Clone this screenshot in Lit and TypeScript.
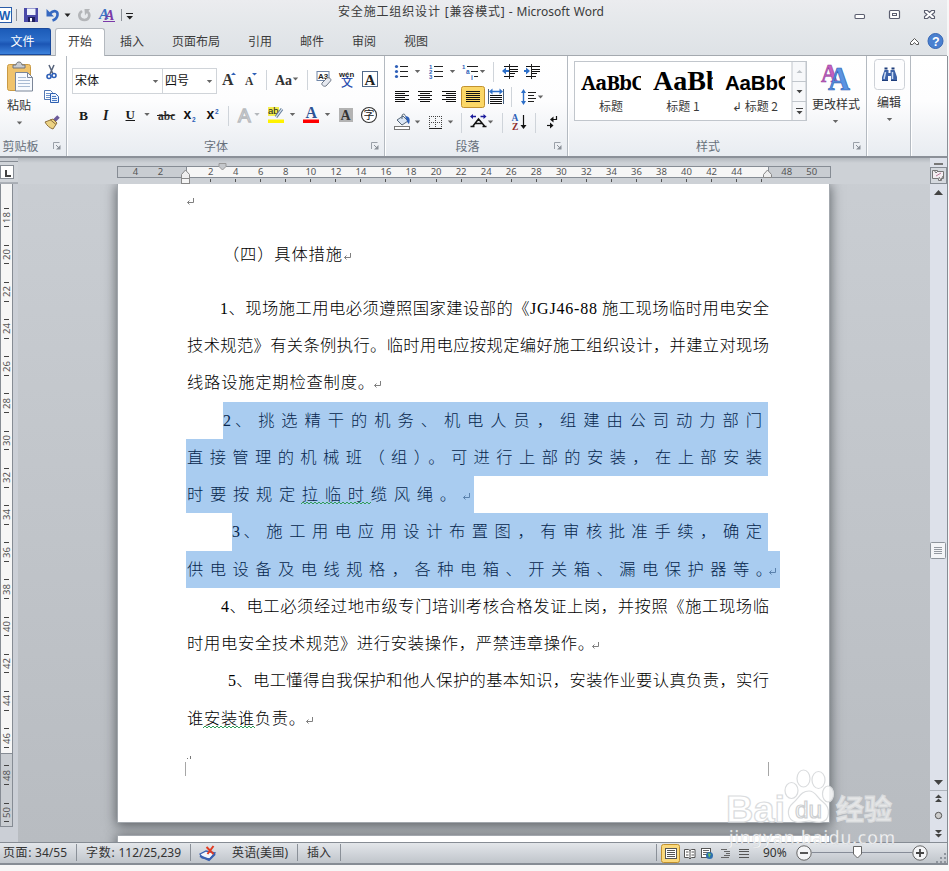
import { LitElement, html, svg, css, nothing } from "lit";
import { customElement } from "lit/decorators.js";
import { styleMap } from "lit/directives/style-map.js";

// Each glyph is drawn in window coordinates; the viewBox picks out its own slot.
const ic = (x: number, y: number, w: number, h: number, body: unknown) =>
  html`<svg class="ic" width=${w} height=${h} viewBox="${x} ${y} ${w} ${h}">${body}</svg>`;
const P = (d: string, stroke: string, w = 1, fill = "none") =>
  svg`<path d=${d} stroke=${stroke} stroke-width=${w} fill=${fill}></path>`;
const F = (d: string, fill: string) => svg`<path d=${d} fill=${fill}></path>`;
const T = (x: number, y: number, s: number, t: string, fill: string, family = "Liberation Serif", weight = 700, extra = "") =>
  svg`<text x=${x} y=${y} font-size=${s} fill=${fill} font-family="${family}" font-weight=${weight} style=${extra}>${t}</text>`;
const arrow = (cx: number, y: number, c = "#666") => F(`M${cx - 2.7} ${y}h5.4l-2.7 3z`, c);
const sep = (x: number, y: number, h: number) => P(`M${x}.5 ${y}v${h}`, "#cfd4da");
const hl = (rows: number[][], c = "#000", w = 1) =>
  P(rows.map(([x, y, n]) => `M${x} ${y}.5h${n}`).join(""), c, w);

const launcher = (x: number) =>
  ic(x, 142, 8, 8, svg`${P(`M${x + 0.5} 149v-6.5h6`, "#9aa0a8")}${P(`M${x + 3} 145l3 3`, "#8a9098")}${F(`M${x + 7.5} 145v4.5h-4.5z`, "#8a9098")}`);

const TABS = ["插入", "页面布局", "引用", "邮件", "审阅", "视图"];

interface Line {
  x: number; w: number; text: unknown; h?: number; mark?: number; sel?: [number, number]; wave?: [number, number];
}
const n = (t: string) => html`<span class="num">${t}</span>`;
const LINES: Line[] = [
  { x: 223, w: 119, text: "（四）具体措施", mark: 343, h: 37 },
  { x: 220, w: 549, text: html`${n("1")}、现场施工用电必须遵照国家建设部的《<span class="num code">JGJ46-88</span> 施工现场临时用电安全` },
  { x: 187, w: 582, text: "技术规范》有关条例执行。临时用电应按规定编好施工组织设计，并建立对现场" },
  { x: 187, w: 187, text: "线路设施定期检查制度。", mark: 373, h: 38 },
  { x: 223, w: 539, text: html`${n("2")}、挑选精干的机务、机电人员，组建由公司动力部门`, sel: [223, 768] },
  { x: 187, w: 575, text: "直接管理的机械班（组）。可进行上部的安装，在上部安装", sel: [186, 768] },
  { x: 187, w: 269, text: "时要按规定拉临时缆风绳。", mark: 462, sel: [186, 474], wave: [301, 371] },
  { x: 232, w: 530, text: html`${n("3")}、施工用电应用设计布置图，有审核批准手续，确定`, sel: [232, 768], h: 38 },
  { x: 187, w: 585, text: "供电设备及电线规格，各种电箱、开关箱、漏电保护器等。", mark: 768, sel: [186, 780] },
  { x: 221, w: 548, text: html`${n("4")}、电工必须经过地市级专门培训考核合格发证上岗，并按照《施工现场临` },
  { x: 187, w: 407, text: "时用电安全技术规范》进行安装操作，严禁违章操作。", mark: 591 },
  { x: 228, w: 541, text: html`${n("5")}、电工懂得自我保护和他人保护的基本知识，安装作业要认真负责，实行`, h: 38 },
  { x: 187, w: 118, text: "谁安装谁负责。", mark: 305, wave: [203, 255] },
];

const mark = (c = "#7f7f7f") =>
  svg`<path d="M7.5 0v4.5h-6M1.5 4.5l2-2M1.5 4.5l2 2M2.5 3.5v2" stroke=${c} fill="none"></path>`;

@customElement("app-root")
export class AppRoot extends LitElement {
  static styles = css`
    :host { display: flex; flex-direction: column; width: 949px; height: 871px; overflow: hidden; position: relative;
      background: #f7f7f7; font: 12px/16px "Noto Sans", "Noto Sans CJK SC", sans-serif; color: #3b3b3b; }
    * { box-sizing: border-box; }
    .ic { display: block; flex: none; overflow: visible; }
    .row { display: flex; }
    .cjk { font-family: "Noto Sans CJK SC", sans-serif; }
    .head { height: 56px; width: 947px; background: linear-gradient(#ebecef, #e5e8eb 40%, #dee2e6); display: flex; flex-direction: column;
      border-bottom: 1px solid #a4a9af; }
    .title { display: flex; height: 28px; }
    .caption { width: 266px; margin-left: 205px; padding-top: 4px; text-align-last: justify; white-space: nowrap; }
    .tabs { display: flex; height: 28px; }
    .file { width: 51px; height: 27px; background: linear-gradient(#1c5bb8, #2b6cc8 45%, #1b55b4 60%, #3c82dc); color: #fff;
      border-radius: 0 3px 0 0; border: 1px solid #1a4a9c; border-left: 0; text-align: center; line-height: 24px; padding-right: 5px; }
    .tab { padding: 0 14px; line-height: 26px; }
    .tab.on { width: 50px; margin-left: 4px; margin-right: 1px; padding: 0 0 0 12px; background: #fff; border: 1px solid #b4b9bf; border-bottom: 0;
      border-radius: 3px 3px 0 0; line-height: 24px; height: 28px; }
    .ribbon { display: flex; height: 102px; width: 948px; background: linear-gradient(#fff, #fdfdfe 45%, #f1f3f6 75%, #e8ecf1);
      border-bottom: 2px solid #8b9098; border-right: 1px solid #8b9098; }
    .group { display: flex; flex-direction: column; border-right: 1px solid #b4bac1; box-shadow: 1px 0 #fff; height: 100px; flex: none; }
    .label { height: 20px; margin-top: auto; display: flex; color: #67707b; line-height: 19px; }
    .label span { flex: 1; text-align: center; }
    .label .ic { margin: 6px 5px 0 0; }
    .combo { height: 26px; border: 1px solid #d0d4d9; background: #fff; display: flex; color: #111; line-height: 22px; padding-left: 2px; justify-content: space-between; }
    .combo + .combo { border-left: 0; }
    .second { margin-top: 6px; }
    .gallery { display: flex; height: 60px; border: 1px solid #c1c6cc; background: #fff; width: 233px; }
    .style { width: 72px; height: 58px; display: flex; flex-direction: column; align-items: center; flex: none; }
    .sample { width: 60px; height: 36px; overflow: hidden; white-space: nowrap; color: #000; font-weight: 700; line-height: 41px; }
    .s1 { font-family: "Noto Serif", "DejaVu Serif", "Liberation Serif", serif; font-size: 20px; letter-spacing: -0.8px; }
    .s2 { font-family: "Liberation Serif", serif; font-size: 28px; line-height: 37px; }
    .s3 { font-family: "Liberation Sans", sans-serif; font-size: 20.5px; letter-spacing: -0.2px; }
    .work { display: grid; grid-template: 26px 658px / 18px 912px 17px 1px; height: 684px; width: 948px;
      background: linear-gradient(#caced3, #b8bcc1); flex: none; }
    .corner { padding: 3px 0 0; background: #c9cdd3; }
    .hr { background: linear-gradient(#b3b8be, #cdd1d6 5px); padding: 8px 0 0 99px; display: flex; flex-direction: column; }
    .bar { display: flex; width: 714px; height: 12px; border: 1px solid #868c94; background: linear-gradient(90deg, #c9cdd2 68px, #868c94 68px, #868c94 69px, #f6f6f6 69px, #f6f6f6 650px, #868c94 650px, #868c94 651px, #c9cdd2 651px);
      padding-left: 5px; font: 9.5px/10px "Noto Sans", sans-serif; color: #555; }
    .bar span { width: 25.06px; text-align: center; flex: none; }
    .vr { grid-row: 2; background: #cbcfd6; }
    .vbar { width: 13px; height: 643px; border: 1px solid #868c94; border-top: 0; background: linear-gradient(#f6f6f6 569px, #868c94 569px, #868c94 570px, #c9cdd2 570px); padding-top: 15px; }
    .vcell { height: 37.2px; display: flex; flex-direction: column; justify-content: space-between; align-items: center; padding: 8.5px 0 9px; }
    .vcell i { width: 5px; height: 1px; background: #444; }
    .vcell b { writing-mode: vertical-rl; transform: rotate(180deg); font: 9.5px/10px "Noto Sans", sans-serif; color: #555; }
    .doc { grid-column: 2; overflow: hidden; padding-left: 99px; background: none; }
    .page { width: 713px; height: 639px; background: #fff; border: 1px solid #a3a8ae; border-top: 0; box-shadow: 0 2px 11px 1px rgba(40,45,50,.62); position: relative; }
    .next { margin-top: 12px; border-top: 1px solid #a3a8ae; height: 40px; }
    .body { padding-top: 14px; display: flex; flex-direction: column; width: 711px; }
    .line { display: flex; align-items: stretch; height: 37px; color: #000; flex: none; }
    .line.sel { color: #06264c; }
    .hl { display: flex; background: #a9ccf0; }
    .plain { display: flex; }
    .txt { position: relative; display: block; white-space: nowrap; text-align: justify; text-align-last: justify; font: 300 16.3px/35px "Noto Sans CJK SC", sans-serif; flex: none; }
    .num { font: 400 16px/20px "Liberation Serif", serif; }
    .sel .num { margin-right: -3px; }
    .code { letter-spacing: 0.8px; }
    .wave { position: absolute; bottom: 8px; height: 4px; }
    .crop { display: flex; justify-content: space-between; width: 584px; margin-left: 67px; height: 14px; border: 1px solid #a6a6a6; border-width: 0 1px; }
    .dots { margin: 19px 0 3px 69px; }
    .scroll { grid-column: 3; grid-row: 1 / 3; background: #dde1ea; }
    .edge { grid-column: 4; grid-row: 1 / 3; background: #868c94; }
    .status { height: 23px; width: 948px; display: flex; flex: none; background: linear-gradient(#e3e6ea, #d3d7dc 45%, #c0c5cb); border: 1px solid #868c94; border-left: 0;
      line-height: 20px; border-bottom: 2px solid #868c94; color: #333; }
    .status span { white-space: nowrap; text-align-last: justify; flex: none; }
    .mark { position: absolute; left: 720px; top: 762px; }
  `;

  private head() {
    return html`<div class="head">
      <div class="title">
        ${ic(0, 0, 133, 28, svg`
          <rect x="-6" y="7.5" width="17.5" height="15" fill="#fff" stroke="#2a5ca8"></rect>${T(-1, 20, 12, "W", "#1b5fb4", "Liberation Sans")}
          ${P("M16.5 9v12", "#8d9299")}
          <rect x="24" y="8" width="14" height="14" fill="#4a4aa8"></rect><rect x="27" y="8.5" width="8.5" height="6.5" fill="#eef2fb"></rect><rect x="28" y="17" width="7" height="5" fill="#20205e"></rect><rect x="30" y="18" width="2" height="3.5" fill="#fff"></rect>
          ${P("M50 13.5c4-4 8-2.500 7.500 1.500c-.3 2.500-2 4.500-5 5.500", "#3568c0", 2.6)}${F("M46.500 9v7.500h7.500z", "#3568c0")}
          ${F("M64.500 13.500h6l-3 3.500z", "#222")}
          ${P("M82 11c-4.500 3-3 9 2.500 9c5 0 6.500-6 2.500-8.500", "#b3b5b8", 2.600)}${F("M84.500 9h5.500l-5 6.500z", "#b3b5b8")}
          ${T(99, 19, 15, "A", "#3c70c4", "Liberation Serif", 700, "font-style:italic")}${T(105, 20, 14, "A", "#7a3aa8", "Liberation Serif", 700, "font-style:italic")}${P("M103 21.500h12", "#7a3aa8")}
          ${P("M121.500 9v12", "#8d9299")}${P("M126 13.500h7", "#222")}${F("M126.500 16h6.500l-3.200 3.500z", "#222")}`)}
        <div class="caption">安全施工组织设计 [兼容模式] - Microsoft Word</div>
        ${ic(604, 0, 343, 28, svg`
          <rect x="855" y="14.500" width="9.500" height="4" rx="1" fill="#fff" stroke="#5c5f70" stroke-width="1.100"></rect>
          <rect x="889.500" y="10.500" width="10" height="8" rx="1" fill="#fff" stroke="#5c5f70" stroke-width="1.200"></rect><rect x="892.500" y="13.500" width="4" height="2" fill="#fff" stroke="#5c5f70"></rect>
          <path d="M924.500 10.500h3l2 2 2-2h3v2l-2.500 2 2.500 2v2h-3l-2-2-2 2h-3v-2l2.500-2-2.500-2z" fill="#fff" stroke="#5c5f70" stroke-width="1.100"></path>`)}
      </div>
      <div class="tabs">
        <div class="file cjk">文件</div><div class="tab on cjk">开始</div>
        ${TABS.map((t) => html`<div class="tab cjk">${t}</div>`)}
        ${ic(442, 28, 505, 28, svg`${P("M910.500 42.500l4-4 4 4v2h-2.200l-1.800-2-1.800 2h-2.200z", "#555", 1, "#fff")}
          <circle cx="935.500" cy="41" r="7.500" fill="#4a80d0" stroke="#3566b4"></circle>${T(932, 45.500, 12.500, "?", "#fff", "Liberation Sans")}`)}
      </div>
    </div>`;
  }

  private clipboard() {
    return html`<div class="group" style="width:67px">
      ${ic(0, 56, 66, 80, svg`
        <rect x="7.500" y="64.500" width="23" height="26" rx="2" fill="#f0c36c" stroke="#c99a45"></rect>
        <path d="M13 68v-3h3c0-4 6-4 6 0h3v3z" fill="#c9ccd0" stroke="#70757c"></path>
        <path d="M15.500 72.500h12l5 5v13.500h-17z" fill="#f7fafe" stroke="#7b8698"></path>${P("M27.500 72.500v5h5", "#7b8698")}
        ${hl([[18, 77, 8], [18, 80, 12], [18, 83, 12], [18, 86, 12]], "#a9bbd3")}
        ${T(7, 110, 12, "粘贴", "#333", "Noto Sans CJK SC", 400)}${arrow(19.500, 121.500)}
        ${P("M49 65l4 9M54 65l-4 9", "#55627a", 1.500)}<circle cx="49" cy="76.500" r="2" fill="none" stroke="#2d5fb8" stroke-width="1.600"></circle><circle cx="54" cy="75.500" r="2" fill="none" stroke="#2d5fb8" stroke-width="1.600"></circle>
        <path d="M44.500 90.500h6l2 2v7h-8z" fill="#fff" stroke="#5479b4"></path>${hl([[46, 93, 4], [46, 95, 4], [46, 97, 4]], "#6d93cc")}
        <path d="M50.500 93.500h5l3 3v6h-8z" fill="#eaf2fd" stroke="#2d5fb0"></path>${hl([[52, 96, 4], [52, 98, 5], [52, 100, 5]], "#4a7ac4")}
        ${P("M54 121l4.500-4.500", "#6b5a9a", 3.500)}${F("M45 122l8-3 4 4-4 6c-3-1-6-3-8-7z", "#ecd283")}${P("M45 122l8-3 4 4-4 6c-3-1-6-3-8-7zM50 119.500l6 5", "#8d7040")}`)}
      <div class="label"><span class="cjk" style="margin-left:-12px">剪贴板</span>${launcher(54)}</div>
    </div>`;
  }

  private font() {
    return html`<div class="group" style="width:318px">
      <div class="row" style="padding:12px 0 0 5px">
        <div class="combo cjk" style="width:91px">宋体${ic(151, 68, 11, 24, arrow(155.500, 79))}</div>
        <div class="combo cjk" style="width:54px">四号${ic(205, 68, 11, 24, arrow(209.500, 79))}</div>
        ${ic(217, 68, 167, 26, svg`
          ${T(222, 85, 16, "A", "#333")}${F("M231 75h5l-2.500-2.500z", "#2d5fb8")}
          ${T(245, 85, 11.500, "A", "#333")}${F("M252 73h5l-2.500 2.500z", "#2d5fb8")}
          ${sep(266, 70, 20)}${T(275, 84.500, 14, "Aa", "#333")}${arrow(295.500, 77.500)}${sep(307, 70, 20)}
          <rect x="317" y="71.500" width="12" height="9" fill="#fff" stroke="#7086a8"></rect>${T(318, 79, 8, "A3", "#222", "Liberation Sans")}
          ${P("M322 83l5-5c2-1 5 1 3.500 3l-4.500 5c-2 1-5-1-4-3z", "#6a7484", 1, "#e6e9f0")}
          ${T(339, 76.500, 7.800, "wén", "#222", "Liberation Sans")}${T(341, 87, 12, "文", "#2c50b0", "Noto Sans CJK SC", 500)}
          <rect x="362.500" y="71.500" width="15" height="15" fill="#fff" stroke="#526a8a"></rect>${T(364.500, 84.500, 15, "A", "#222")}`)}
      </div>
      <div class="second">${ic(67, 100, 317, 30, svg`
        ${T(79, 119.500, 13.500, "B", "#1a1a1a")}${T(103, 119.500, 14, "I", "#1a1a1a", "Liberation Serif", 700, "font-style:italic")}
        ${T(125.500, 118.500, 13, "U", "#1a1a1a")}${P("M125.500 120.500h9.500", "#1a1a1a")}${arrow(147, 113)}
        ${T(158, 119.500, 11.500, "abc", "#333")}${P("M157 115.500h17.500", "#222")}
        ${T(183.500, 119, 14, "x", "#111", "Liberation Sans")}${T(192, 121.500, 6.500, "2", "#2d5fb8", "Liberation Sans")}
        ${T(206.500, 119, 14, "x", "#111", "Liberation Sans")}${T(215, 113.500, 6.500, "2", "#2d5fb8", "Liberation Sans")}
        ${sep(228, 106, 20)}${svg`<text x="238" y="121.500" font-size="19" font-family="Liberation Sans" fill="#f7f7f7" stroke="#b9bcc0" stroke-width="1.300">A</text>`}${arrow(257, 113, "#b5b8bc")}
        <rect x="268" y="107" width="11" height="9" fill="#f4ee4c"></rect>${T(268, 114, 9.500, "ab", "#222", "Liberation Sans", 400)}${P("M276 117l6-8", "#667f9c", 3)}${P("M276 117l6-8", "#dfe8f2", 1.200)}
        <rect x="268" y="119.500" width="16" height="3.500" fill="#fff200"></rect>${arrow(292.500, 113)}
        ${T(305.500, 118, 16, "A", "#2d5295")}<rect x="303" y="119.500" width="16" height="3.500" fill="#f00"></rect>${arrow(327.500, 113)}
        <rect x="339" y="108" width="14" height="14" fill="#b3b3b3"></rect>${T(340.500, 119.800, 14, "A", "#333")}
        <circle cx="369" cy="115" r="7.500" fill="#fff" stroke="#333" stroke-width="1.100"></circle>${T(363.500, 119.200, 11, "字", "#222", "Noto Sans CJK SC", 400)}`)}</div>
      <div class="label"><span class="cjk" style="margin-left:-6px">字体</span>${launcher(372)}</div>
    </div>`;
  }

  private paragraph() {
    const al = (x: number, off: (i: number) => [number, number]) =>
      hl([0, 1, 2, 3, 4, 5].map((i) => { const [o, w] = off(i); return [x + o, 91 + i * 2, w]; }), "#111");
    return html`<div class="group" style="width:183px">
      ${ic(385, 56, 182, 28, svg`
        ${[66.500, 71.500, 76.500].map((y) => svg`<circle cx="396.500" cy=${y} r="1.600" fill="#2d5fb8"></circle>${P(`M400 ${y}h8`, "#222")}`)}${arrow(417.500, 70)}
        ${["1", "2", "3"].map((t, i) => svg`${T(429, 69 + i * 5, 6, t, "#2d5fb8", "Liberation Sans")}${P(`M434 ${66.500 + i * 5}h9`, "#222")}`)}${arrow(452.500, 70)}
        ${T(462, 68.500, 6, "1", "#2d5fb8", "Liberation Sans")}${T(466, 74, 6.500, "a", "#2d5fb8", "Liberation Sans")}${T(471, 79.500, 6.500, "i", "#2d5fb8", "Liberation Sans")}
        ${hl([[467, 66, 11], [471, 71, 7], [474, 76, 4]], "#222")}${arrow(482.500, 70)}${sep(493, 62, 20)}
        ${hl([[504, 66, 14], [510, 69, 8], [510, 71, 8], [510, 73, 5], [504, 76, 10]], "#111", 1.200)}${P("M509.500 64v15", "#222")}${F("M502 71l4-3.500v2.500h3v2h-3v2.500z", "#2d6fc8")}
        ${hl([[526, 66, 14], [532, 69, 8], [532, 71, 8], [532, 73, 5], [526, 76, 10]], "#111", 1.200)}${P("M531.500 64v15", "#222")}${F("M530 71l-4-3.500v2.500h-2v2h2v2.500z", "#2d6fc8")}`)}
      ${ic(385, 84, 182, 26, svg`
        ${al(395, (i) => [0, i % 2 ? 10 : 14])}${al(418, (i) => (i % 2 ? [2, 10] : [0, 14]))}${al(442, (i) => (i % 2 ? [4, 10] : [0, 14]))}
        <rect x="461.500" y="86.500" width="23" height="21" rx="2" fill="#fbd767" stroke="#c2922f"></rect>${al(466, () => [0, 14])}
        ${P("M488.500 89v15M503.500 89v15", "#46607f")}${P("M491 91.500h10", "#2d6fc8", 1.500)}${F("M489 91.500l3.500-3v6zM503 91.500l-3.500-3v6z", "#2d6fc8")}${hl([[490, 95, 12], [490, 97, 12], [490, 99, 12], [490, 101, 12], [490, 103, 12]], "#111")}
        ${sep(511, 87, 20)}${P("M523.500 91v12", "#2d6fc8", 1.400)}${F("M521 93h5l-2.500-4zM521 101h5l-2.500 4z", "#2d6fc8")}${hl([[528, 92, 8], [528, 95, 6], [528, 98, 8], [528, 101, 6]], "#222")}${arrow(540.500, 95.500)}`)}
      ${ic(385, 110, 182, 26, svg`
        <rect x="394.500" y="126.500" width="15" height="3" fill="#fff" stroke="#777"></rect>${P("M397 120l6-4 5 5-6 4z", "#567", 1, "#dbe6f4")}${P("M402 119v-3c0-3 4-2 3 0", "#567")}${F("M405 116c5 0 5.500 4 4 8c-2-1-2-4-4-8z", "#2d5fb8")}${arrow(417.500, 120.500)}
        <path d="M429 116.500h13M429.500 116v12M435.500 116v12M441.500 116v12M429 122.500h13" stroke="#444" stroke-dasharray="1 1" fill="none"></path>${P("M429 128.500h13", "#222")}${arrow(450.500, 120.500)}
        ${sep(461, 113, 20)}${P("M470.500 126.500h4M482.500 126.500h4M473 126l5.500-7 6 7M475 123.500h7", "#111", 1.500)}${F("M470 116.500l3-2.500v5zM486.500 116.500l-3-2.500v5z", "#1c1c9c")}${P("M472 116.500h4M480.500 116.500h4", "#1c1c9c", 1.400)}${arrow(490.500, 120.500)}${sep(502, 113, 20)}
        ${T(511.500, 121, 9.500, "A", "#2d5fb8")}${T(512, 129.500, 9.500, "Z", "#8e2a2a")}${P("M523.500 115v11", "#111", 1.200)}${F("M520.500 125h6l-3 4z", "#111")}${sep(535, 113, 20)}
        ${P("M556.500 116v3.500h-4", "#111", 1.200)}${F("M550 119.500l3.500-3v6z", "#111")}${P("M547 125.500h4", "#111", 1.200)}${F("M553.500 125.500l-3.500-3v6z", "#111")}`)}
      <div class="label"><span class="cjk" style="margin-left:-4px">段落</span>${launcher(555)}</div>
    </div>`;
  }

  private stylesGroup() {
    return html`<div class="group" style="width:299px">
      <div class="row" style="padding:5px 0 0 6px">
        <div class="gallery">
          <div class="style"><div class="sample s1">AaBbC</div><span class="cjk">标题</span></div>
          <div class="style"><div class="sample s2">AaBbC</div><span class="cjk">标题 1</span></div>
          <div class="style"><div class="sample s3">AaBbC</div><span class="cjk">↲ 标题 2</span></div>
          ${ic(791, 62, 15, 58, svg`<rect x="792" y="61.500" width="14" height="59" fill="#f7f8fa" stroke="#c1c6cc"></rect>${P("M792 81.500h14M792 101.500h14", "#c1c6cc")}
            ${F("M796.500 73h6l-3-3z", "#bfc3c8")}${F("M796.500 90h6l-3 3.200z", "#444")}${P("M796 108.500h7", "#444")}${F("M796.500 111h6l-3 3.200z", "#444")}`)}
        </div>
        ${ic(807, 61, 59, 68, svg`
          <g font-family="Liberation Serif" font-weight="700"><text x="821" y="82" font-size="26" textLength="17" lengthAdjust="spacingAndGlyphs" fill="#c55fc0" stroke="#8e3a97" stroke-width=".6">A</text>
          <text x="828" y="90" font-size="34" textLength="22" lengthAdjust="spacingAndGlyphs" fill="#5b93e2" stroke="#2d62b4" stroke-width=".7">A</text></g>
          ${T(812, 109, 12, "更改样式", "#333", "Noto Sans CJK SC", 400)}${arrow(835.500, 120)}`)}
      </div>
      <div class="label"><span class="cjk" style="margin-left:-5px">样式</span>${launcher(854)}</div>
    </div>
    <div class="group" style="width:44px">
      ${ic(867, 56, 43, 80, svg`<rect x="874.500" y="59.500" width="30" height="30" rx="3" fill="#fdfdfe" stroke="#cdd1d7"></rect>
        ${F("M884.500 70h4v3h2v-3h4l2.500 7v4h-6v-5h-3v5h-6v-4z", "#3c62a8")}${P("M885.500 72l-1.500 7M892.500 72v7", "#c7d9f3", 1.500)}${P("M882 80.500h6M891 80.500h6", "#1d3c7a", 1)}${F("M884.500 67.500h3v2h-3zM891.500 67.500h3v2h-3z", "#1d3c7a")}
        ${T(877, 107, 12, "编辑", "#333", "Noto Sans CJK SC", 400)}${arrow(889.500, 118)}`)}
    </div>`;
  }

  private line(l: Line) {
    const h = l.h ?? 37;
    const markAt = l.mark ? html`<svg class="ic" width="8" height="7" style=${styleMap({ marginLeft: `${l.mark - l.x - l.w}px`, marginTop: "17px" })}>${mark(l.sel ? "#5b82ad" : "#7f7f7f")}</svg>` : nothing;
    const wave = l.wave ? html`<svg class="wave" width=${l.wave[1] - l.wave[0]} height="4" style=${styleMap({ left: `${l.wave[0] - l.x}px` })}>
      <path d=${"M0 3" + "l2 -2l2 2".repeat(Math.ceil((l.wave[1] - l.wave[0]) / 4))} fill="none" stroke="#2f9c5a"></path></svg>` : nothing;
    const start = l.sel ? l.sel[0] : l.x;
    return html`<div class="line ${l.sel ? "sel" : ""}" style=${styleMap({ height: `${h}px`, paddingLeft: `${start - 118}px` })}>
      <div class=${l.sel ? "hl" : "plain"} style=${styleMap({ width: l.sel ? `${l.sel[1] - l.sel[0]}px` : "auto", paddingLeft: `${l.x - start}px` })}>
        <span class="txt" style=${styleMap({ width: `${l.w}px` })}>${l.text}${wave}</span>${markAt}
      </div></div>`;
  }

  private work() {
    const hs = ["4", "2", "", ...Array.from({ length: 22 }, (_, i) => `${(i + 1) * 2}`), "", "48", "50"];
    return html`<div class="work">
      <div class="corner">${ic(0, 161, 18, 23, svg`<rect x="-1" y="161.500" width="19.500" height="21.500" fill="#d0d4d9" stroke="#868c94"></rect><rect x="0.500" y="165.500" width="13" height="13" fill="#fff" stroke="#868c94"></rect>${P("M6 170v6h5", "#444", 2)}`)}</div>
      <div class="hr"><div class="bar">${hs.map((t) => html`<span>${t}</span>`)}</div>
        ${ic(117, 178, 714, 6, svg`${P(Array.from({ length: 23 }, (_, i) => `M${Math.floor(210.500 + i * 25.060)}.5 179v3`).join(""), "#555")}
          <path d="M219 163.500h7v3l-3.500 3.500-3.500-3.500z" fill="#c4c7cb" stroke="#999"></path>
          <path d="M181.500 178.500v-4l4-4.500 4 4.500v4z" fill="#eee" stroke="#888"></path><rect x="181.500" y="178.500" width="8" height="5" fill="#f4f4f4" stroke="#888"></rect>
          <path d="M763.500 177.500v-3l4-4.500 4 4.500v3z" fill="#eee" stroke="#888"></path>`)}</div>
      <div class="vr"><div class="vbar">${Array.from({ length: 17 }, (_, i) => html`<div class="vcell"><i></i><b>${18 + i * 2}</b><i></i></div>`)}</div></div>
      <div class="doc">
        <div class="page"><div class="body">
          <svg class="ic" width="8" height="7" style="margin-left:68px">${mark()}</svg>
          <div style="height:31px"></div>
          ${this.line(LINES[0])}
          <div style="height:17px"></div>
          ${LINES.slice(1).map((l) => this.line(l))}
          <svg class="ic dots" width="6" height="3"><path d="M0 2.500h1M3.500 0v3" stroke="#777"></path></svg>
          <div class="crop"></div>
        </div></div>
        <div class="page next"></div>
      </div>
      <div class="scroll">${ic(930, 158, 17, 684, svg`
        ${P("M934 164h9", "#777", 2)}<rect x="930.500" y="167.500" width="16" height="16" fill="#d5d9df" stroke="#868c94"></rect>
        <path d="M932.500 170.500h5v1h6v7h-2v2h-3v-2h-6z" fill="#f4eef2" stroke="#777"></path>${P("M934 170l2 3 2-2M939 177l2 3 2-4", "#777")}${P("M936 176l5-3", "#b87a98")}
        ${F("M934 195h9l-4.500-5z", "#444")}
        <rect x="930.500" y="542.500" width="15" height="16" rx="1" fill="#f3f4f7" stroke="#8e949c"></rect>${hl([[934, 547, 8], [934, 549, 8], [934, 551, 8], [934, 553, 8]], "#9398a0")}
        ${F("M934 780h9l-4.500 5z", "#444")}${P("M930 790.500h17", "#aeb3bb")}
        ${F("M935 798h7l-3.500-3.500zM935 802h7l-3.500-3.500z", "#444")}<circle cx="938.500" cy="815.500" r="3.200" fill="#ccc" stroke="#555"></circle>
        ${F("M935 830h7l-3.500 3.500zM935 834h7l-3.500 3.500z", "#444")}`)}</div>
      <div class="edge"></div>
    </div>`;
  }

  private status() {
    const st = (x: number) => P(`M${x}.5 844v17`, "#8a9098");
    return html`<div class="status">
      <span style="width:64px;margin-left:3px">页面: 34/55</span>
      ${ic(67, 843, 19, 20, st(76))}
      <span style="width:95px">字数: 112/25,239</span>
      ${ic(181, 843, 51, 20, svg`${st(190)}${P("M200 854l6-3 9 2-5 6-8-1z", "#3a60b0", 1.300, "#f3f6fc")}${P("M200 856l9 4 6-6", "#3a60b0", 2)}${P("M206.500 847l7 7M213.500 846l-6 8", "#e23b22", 2)}`)}
      <span style="width:56px">英语(美国)</span>${ic(288, 843, 19, 20, st(297))}<span style="width:24px">插入</span>
      ${ic(331, 843, 432, 20, svg`${st(340)}${st(656)}
        <rect x="661.500" y="844.500" width="18" height="18" rx="2" fill="#fbd97c" stroke="#c2922f"></rect><rect x="665.500" y="848.500" width="11" height="10" fill="#fff" stroke="#555"></rect>${hl([[667, 850, 8], [667, 852, 8], [667, 854, 8], [667, 856, 8]], "#555")}
        <path d="M684.500 849.500h4l1.500 1 1.500-1h3.500v8h-3.500l-1.500 1.500-1.500-1.500h-4z" fill="#fff" stroke="#555"></path>${P("M690 850v8M686 852h2.500M686 855h2.500M691.500 852h2.500M691.500 855h2.500", "#555")}
        <rect x="701.500" y="848.500" width="9" height="9" fill="#fff" stroke="#555"></rect>${hl([[703, 850, 6], [703, 852, 6], [703, 854, 4]], "#666")}<circle cx="709.500" cy="855.500" r="3.500" fill="#2d6fae"></circle>${F("M708 853l3 1-2 4z", "#6cbf5a")}
        ${hl([[721, 849, 6], [724, 851, 6], [726, 853, 4], [724, 855, 6], [721, 857, 8]], "#666")}
        ${hl([[739, 849, 10], [739, 851, 10], [739, 854, 10], [739, 857, 10]], "#555")}`)}
      <span style="width:26px">90%</span>
      ${ic(789, 843, 158, 20, svg`${P("M812 852.500h100", "#868c98", 1)}
        <circle cx="804" cy="853" r="7.200" fill="#f4f5f7" stroke="#666"></circle>${P("M800 853h8", "#444", 1.800)}
        <circle cx="920" cy="853" r="7.200" fill="#f4f5f7" stroke="#666"></circle>${P("M916 853h8M920 849v8", "#444", 1.800)}
        <path d="M853.500 846.500h8v7.500l-4 4-4-4z" fill="#fff" stroke="#666"></path>
        ${F("M944 853h2v2h-2zM940 857h2v2h-2zM944 857h2v2h-2zM936 861h2v2h-2zM940 861h2v2h-2zM944 861h2v2h-2z", "#8f959d")}`)}
    </div>`;
  }

  private watermark() {
    return html`<svg class="mark" width="190" height="88" viewBox="720 762 190 88">
      <g fill="#fff" fill-opacity=".85" stroke="#dadcde" stroke-width="1.200" font-family="Liberation Sans" font-weight="700">
        <ellipse cx="791.500" cy="790.500" rx="6.500" ry="8"></ellipse><ellipse cx="803.500" cy="778.500" rx="6.500" ry="8.500"></ellipse><ellipse cx="818.500" cy="780" rx="6.500" ry="8.500"></ellipse><ellipse cx="828" cy="794" rx="5.500" ry="8"></ellipse>
        <path d="M809 791c7 0 8 7 14 11c8 6 7 19-2 20c-5 1-8-1-12-1s-8 2-13 1c-9-2-10-13-3-19c6-5 8-12 16-12z"></path>
        <text x="726" y="822" font-size="37" textLength="59" lengthAdjust="spacingAndGlyphs">Bai</text>
        <text x="795" y="818" font-size="24" textLength="27" lengthAdjust="spacingAndGlyphs" font-weight="400" fill="#fff" stroke="#cdcfd1">du</text>
        <text x="836" y="820" font-size="28" font-family="Noto Sans CJK SC" fill="#eee">经验</text></g>
      <text x="729" y="844" font-size="17.500" textLength="166" fill="#fff" fill-opacity=".9" stroke="#c4c7ca" stroke-width=".3" font-family="Noto Sans">jingyan.baidu.com</text>
    </svg>`;
  }

  render() {
    return html`${this.head()}
      <div class="ribbon">${this.clipboard()}${this.font()}${this.paragraph()}${this.stylesGroup()}</div>
      ${this.work()}${this.status()}${this.watermark()}`;
  }
}
